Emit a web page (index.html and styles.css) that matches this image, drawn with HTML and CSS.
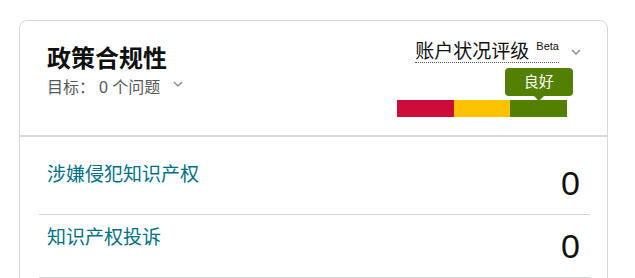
FILE: index.html
```html
<!DOCTYPE html>
<html lang="zh-CN">
<head>
    <meta charset="UTF-8">
    <meta name="viewport" content="width=device-width, initial-scale=1.0">
    <title>政策合规性</title>
    <link rel="stylesheet" href="styles.css">
</head>
<body>
    <div class="card">
        <div class="card-head">
            <div class="head-left">
                <h2 class="title">政策合规性</h2>
                <div class="goal">
                    <span class="goal-label">目标：</span>
                    <span>0 个问题</span>
                    <svg class="chevron" width="10" height="6" viewBox="0 0 10 6"><polyline points="1,1 5,5 9,1"/></svg>
                </div>
            </div>
            <div class="rating">
                <div class="rating-top">
                    <span class="rating-label">账户状况评级<sup class="beta">Beta</sup></span>
                    <svg class="chevron" width="10" height="6" viewBox="0 0 10 6"><polyline points="1,1 5,5 9,1"/></svg>
                </div>
                <div class="gauge">
                    <div class="gauge-tip">良好</div>
                    <span class="seg seg-bad"></span>
                    <span class="seg seg-fair"></span>
                    <span class="seg seg-good"></span>
                </div>
            </div>
        </div>
        <ul class="issues">
            <li class="issue">
                <a class="issue-name" href="#">涉嫌侵犯知识产权</a>
                <span class="issue-count">0</span>
            </li>
            <li class="issue">
                <a class="issue-name" href="#">知识产权投诉</a>
                <span class="issue-count">0</span>
            </li>
        </ul>
    </div>
</body>
</html>
```

FILE: styles.css
```css
* {
    margin: 0;
    padding: 0;
    box-sizing: border-box;
}
html, body {
    overflow: hidden;
    background: #fff;
}
body {
    font-family: "Liberation Sans", Arial, "Noto Sans CJK SC", sans-serif;
    color: #0f1111;
    padding: 20px 0 0 19px;
}
.card {
    width: 589px;
    border: 1px solid #d5d9d9;
    border-radius: 8px;
}
.card-head {
    display: flex;
    justify-content: space-between;
    padding: 23px 26px 18px 27px;
    border-bottom: 2px solid #d5d9d9;
}
.title {
    font-size: 24px;
    line-height: 30px;
    font-weight: bold;
}
.goal {
    display: flex;
    align-items: center;
    margin-top: 4px;
    font-size: 16px;
    line-height: 20px;
    color: #565959;
}
.goal-label {
    margin-right: 4px;
}
.goal .chevron {
    margin-left: 13px;
    margin-top: -8px;
}
.chevron polyline {
    fill: none;
    stroke: #8d9096;
    stroke-width: 1.5;
}
.rating {
    display: flex;
    flex-direction: column;
    align-items: flex-end;
    margin-top: -2px;
}
.rating-top {
    display: flex;
    align-items: center;
}
.rating-label {
    font-size: 19px;
    line-height: 20px;
    border-bottom: 1px dotted #565959;
}
.beta {
    font-size: 11px;
    vertical-align: top;
    position: relative;
    top: -6px;
    margin-left: 7px;
}
.rating-top .chevron {
    margin-left: 12px;
    margin-top: -2px;
}
.gauge {
    display: grid;
    grid-template-columns: repeat(3, minmax(0, 1fr));
    grid-template-rows: auto 17px;
    width: 170px;
    margin-right: 14px;
    margin-top: 5px;
}
.gauge-tip {
    grid-column: 3;
    justify-self: center;
    position: relative;
    width: 68px;
    height: 28px;
    margin-bottom: 4px;
    background: #538000;
    border-radius: 4px;
    color: #fff;
    font-size: 15px;
    line-height: 28px;
    text-align: center;
}
.gauge-tip::after {
    content: "";
    position: absolute;
    left: 50%;
    bottom: -5px;
    margin-left: -5px;
    border-left: 5px solid transparent;
    border-right: 5px solid transparent;
    border-top: 5px solid #538000;
}
.seg {
    grid-row: 2;
}
.seg-bad {
    background: #cc0c39;
}
.seg-fair {
    background: #ffc200;
}
.seg-good {
    background: #538000;
}
.issues {
    list-style: none;
    padding: 15px 17px 20px 19px;
}
.issue {
    display: flex;
    justify-content: space-between;
    align-items: flex-start;
    padding: 11px 10px 11px 8px;
    border-bottom: 1px solid #d5d9d9;
}
.issue-name {
    font-size: 19px;
    line-height: 24px;
    color: #007185;
    text-decoration: none;
}
.issue-count {
    font-size: 34px;
    line-height: 40px;
}
```
